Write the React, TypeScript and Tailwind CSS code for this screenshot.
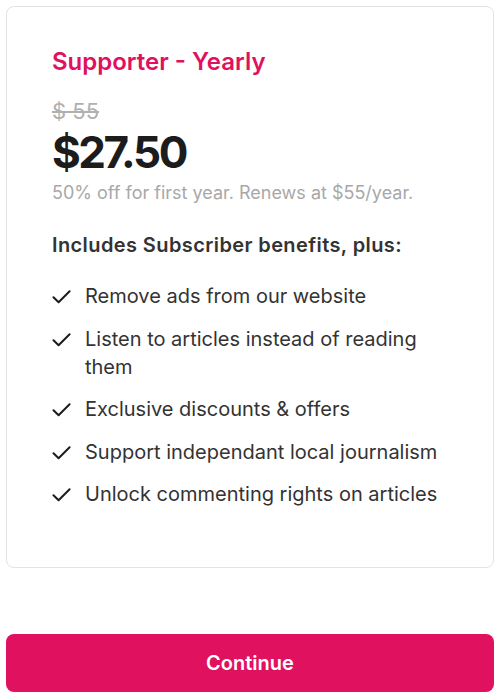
const BENEFITS = [
  'Remove ads from our website',
  'Listen to articles instead of reading them',
  'Exclusive discounts & offers',
  'Support independant local journalism',
  'Unlock commenting rights on articles',
]

function Tick() {
  return (
    <svg viewBox="0 0 20 14" className="mt-[8px] w-[20px] h-[14px] shrink-0" fill="none">
      <path d="M1.5 7.2 6.6 12.3 17.6 1.2" stroke="#1c1c1c" strokeWidth="2" strokeLinecap="round" strokeLinejoin="round" />
    </svg>
  )
}

export default function App() {
  return (
    <div className="w-[500px] h-[698px] bg-white px-[6px] pt-[6px] flex flex-col font-['Inter',sans-serif]">
      <div className="h-[562px] border border-[#e3e3e3] rounded-[8px] pl-[45px] pr-[40px] pt-[40px]">
        <h2 className="text-[24px] leading-[30px] font-semibold text-[#e0115f]">Supporter - Yearly</h2>
        <div className="mt-[20px] text-[22px] leading-[29px] text-[#b0b0b0] line-through">$ 55</div>
        <div className="text-[44px] leading-[52px] font-bold text-[#1c1c1c] tracking-[-2.5px]">$27.50</div>
        <p className="mt-[3px] text-[18px] leading-[24px] text-[#a8a8a8]">
          50% off for first year. Renews at $55/year.
        </p>
        <h3 className="mt-[26px] text-[20px] leading-[28px] font-semibold text-[#333] tracking-[0.4px]">
          Includes Subscriber benefits, plus:
        </h3>
        <ul className="mt-[23px] flex flex-col gap-[14.5px]">
          {BENEFITS.map(b => (
            <li key={b} className="flex items-start gap-[13px] text-[20px] leading-[28px] text-[#333]">
              <Tick />
              <span>{b}</span>
            </li>
          ))}
        </ul>
      </div>
      <button className="mt-[66px] h-[58px] w-full rounded-[8px] bg-[#e0115f] text-white text-[20px] font-semibold">
        Continue
      </button>
    </div>
  )
}
